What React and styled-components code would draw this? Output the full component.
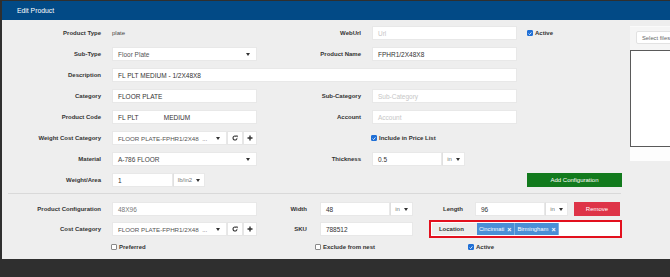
import React from 'react';
import styled, { createGlobalStyle } from 'styled-components';

const GlobalStyle = createGlobalStyle`
  html, body {
    margin: 0;
    padding: 0;
    background: #2f2f2f;
    overflow: hidden;
  }
  body {
    font-family: "Liberation Sans", Arial, sans-serif;
  }
`;

const Page = styled.div`
  width: 670px;
  height: 277px;
  overflow: hidden;
  padding: 1px 0 0 2px;
  box-sizing: border-box;
`;

const Modal = styled.div`
  width: 720px;
  background: #eeeeee;
`;

const Header = styled.div`
  height: 19px;
  background: #024a86;
  color: #fff;
  font-size: 6.8px;
  display: flex;
  align-items: center;
  padding-left: 15px;
`;

const Body = styled.div`
  display: flex;
  height: 239px;
  padding-top: 6px;
  box-sizing: border-box;
`;

const Form = styled.div`
  width: 620px;
  display: flex;
  flex-direction: column;
`;

const Rows = styled.div`
  display: flex;
  flex-direction: column;
  gap: ${p => p.$gap}px;
`;

const Row = styled.div`
  display: flex;
  align-items: center;
  height: 14px;
`;

const Label = styled.div`
  width: ${p => p.$w}px;
  margin-right: ${p => p.$mr ?? 11}px;
  flex-shrink: 0;
  text-align: right;
  font-size: 6px;
  font-weight: bold;
  color: #333;
  white-space: nowrap;
`;

const Static = styled.div`
  width: ${p => p.$w}px;
  font-size: 6px;
  color: #444;
`;

const Field = styled.div`
  width: ${p => p.$w}px;
  height: 14px;
  flex-shrink: 0;
  box-sizing: border-box;
  background: #fff;
  border: 1px solid #e8e8e8;
  padding: 0 6px 0 5px;
  display: flex;
  align-items: center;
  justify-content: space-between;
  font-size: ${p => p.$fs ?? 6.5}px;
  color: ${p => p.$tone ?? '#333'};
  white-space: pre;
  overflow: hidden;
`;

const Caret = styled.span`
  width: 0;
  height: 0;
  border-left: 2px solid transparent;
  border-right: 2px solid transparent;
  border-top: 3px solid #333;
  flex-shrink: 0;
`;

const Unit = styled.div`
  width: ${p => p.$w}px;
  height: 14px;
  box-sizing: border-box;
  background: #fff;
  border: 1px solid #e8e8e8;
  border-left-color: #e0e0e0;
  display: flex;
  align-items: center;
  justify-content: center;
  gap: 4px;
  font-size: 6px;
  color: #777;
`;

const IconBtn = styled.div`
  width: ${p => p.$w}px;
  height: 14px;
  box-sizing: border-box;
  background: #fff;
  border: 1px solid #e6e6e6;
  display: flex;
  align-items: center;
  justify-content: center;
`;

const Check = styled.div`
  display: flex;
  align-items: center;
  gap: 2px;
  font-size: 6px;
  font-weight: bold;
  color: #333;
  margin-left: ${p => p.$ml ?? 0}px;
  width: ${p => (p.$w ? `${p.$w}px` : 'auto')};
`;

const Box = styled.span`
  width: 6px;
  height: 6px;
  box-sizing: border-box;
  border-radius: 1px;
  background: ${p => (p.$on ? '#1f6fd6' : '#fff')};
  border: 1px solid ${p => (p.$on ? '#1f6fd6' : '#8a8a8a')};
  display: flex;
  align-items: center;
  justify-content: center;
`;

const Button = styled.div`
  width: ${p => p.$w}px;
  height: 14px;
  margin-left: ${p => p.$ml ?? 0}px;
  background: ${p => p.$bg};
  color: #fff;
  font-size: 6px;
  display: flex;
  align-items: center;
  justify-content: center;
`;

const Divider = styled.div`
  width: 613px;
  height: 1px;
  background: #d9d9d9;
  margin: 6px 0 8px 6px;
`;

const LocationBox = styled.div`
  width: 194px;
  height: 18px;
  margin-left: 16px;
  box-sizing: border-box;
  border: 2px solid #e3101e;
  padding: 1px;
  background: #fff;
  display: flex;
`;

const LocLabel = styled.div`
  width: 45px;
  background: #ececec;
  font-size: 6px;
  font-weight: bold;
  color: #333;
  display: flex;
  align-items: center;
  padding-left: 7px;
  box-sizing: border-box;
`;

const Tag = styled.div`
  background: #4a8fd6;
  color: #fff;
  font-size: 5.8px;
  display: flex;
  align-items: center;
  gap: 3px;
  padding: 0 3px 0 2px;
  border-right: 1px solid #7db0e3;

  b {
    font-size: 7px;
  }
`;

const CheckRow = styled.div`
  display: flex;
  align-items: center;
  height: 8px;
  margin-top: 7px;
  padding-left: 109px;
`;

const Side = styled.div`
  margin-left: 8px;
  width: 90px;
  align-self: flex-start;
  background: #f5f5f5;
  border-top: 1px solid #fafafa;
`;

const SelectFiles = styled.div`
  margin: 4px 0 0 6px;
  height: 13px;
  box-sizing: border-box;
  background: #fff;
  border: 1px solid #e2e2e2;
  border-radius: 2px;
  font-size: 5.8px;
  color: #666;
  display: flex;
  align-items: center;
  padding-left: 5px;
  white-space: nowrap;
`;

const DropZone = styled.div`
  margin-top: 6px;
  height: 97px;
  box-sizing: border-box;
  background: #fff;
  border: 1px solid #5a5a5a;
`;

const DropFoot = styled.div`
  height: 14px;
  background: #fdfdfd;
`;

const Tick = () => (
  <svg width="5" height="5" viewBox="0 0 10 10">
    <path d="M1.5 5.2 L4 7.7 L8.6 2.3" fill="none" stroke="#fff" strokeWidth="2" />
  </svg>
);

const Refresh = () => (
  <svg width="6" height="6" viewBox="0 0 12 12">
    <path d="M10 6.5a4 4 0 1 1-1.3-3.4" fill="none" stroke="#333" strokeWidth="2.2" />
    <path d="M7 0.8 L11.4 0.8 L11.4 5.2 Z" fill="#333" />
  </svg>
);

const Plus = () => (
  <svg width="6" height="6" viewBox="0 0 12 12">
    <path d="M4.6 1h2.8v3.6H11v2.8H7.4V11H4.6V7.4H1V4.6h3.6z" fill="#333" />
  </svg>
);

const CheckItem = ({ on, children, ml, w }) => (
  <Check $ml={ml} $w={w}>
    <Box $on={on}>{on && <Tick />}</Box>
    {children}
  </Check>
);

const Select = ({ w, children, fs, tone }) => (
  <Field $w={w} $fs={fs} $tone={tone}>
    <span>{children}</span>
    <Caret />
  </Field>
);

const CategoryPicker = () => (
  <>
    <Select w={115} fs={6.2} tone="#555">FLOOR PLATE-FPHR1/2X48  ...</Select>
    <IconBtn $w={16}><Refresh /></IconBtn>
    <IconBtn $w={14}><Plus /></IconBtn>
  </>
);

export default function App() {
  return (
    <Page>
      <GlobalStyle />
      <Modal>
        <Header>Edit Product</Header>
        <Body>
          <Form>
            <Rows $gap={7}>
              <Row>
                <Label $w={99}>Product Type</Label>
                <Static $w={145}>plate</Static>
                <Label $w={104}>WebUrl</Label>
                <Field $w={145} $tone="#c6c6c6">Url</Field>
                <CheckItem on ml={10}>Active</CheckItem>
              </Row>
              <Row>
                <Label $w={99}>Sub-Type</Label>
                <Select w={145} tone="#555">Floor Plate</Select>
                <Label $w={104}>Product Name</Label>
                <Field $w={145}>FPHR1/2X48X8</Field>
              </Row>
              <Row>
                <Label $w={99}>Description</Label>
                <Field $w={405}>FL PLT MEDIUM - 1/2X48X8</Field>
              </Row>
              <Row>
                <Label $w={99}>Category</Label>
                <Field $w={145}>FLOOR PLATE</Field>
                <Label $w={104}>Sub-Category</Label>
                <Field $w={145} $tone="#c6c6c6">Sub-Category</Field>
              </Row>
              <Row>
                <Label $w={99}>Product Code</Label>
                <Field $w={145}>{'FL PLT              MEDIUM'}</Field>
                <Label $w={104}>Account</Label>
                <Field $w={145} $tone="#c6c6c6">Account</Field>
              </Row>
              <Row>
                <Label $w={99}>Weight Cost Category</Label>
                <CategoryPicker />
                <CheckItem on ml={114}>Include in Price List</CheckItem>
              </Row>
              <Row>
                <Label $w={99}>Material</Label>
                <Select w={145} tone="#444">A-786 FLOOR</Select>
                <Label $w={104}>Thickness</Label>
                <Field $w={70}>0.5</Field>
                <Unit $w={23}>in <Caret /></Unit>
              </Row>
              <Row>
                <Label $w={99}>Weight/Area</Label>
                <Field $w={61}>1</Field>
                <Unit $w={32}>lb/in2 <Caret /></Unit>
                <Button $w={95} $ml={322} $bg="#127a1d">Add Configuration</Button>
              </Row>
            </Rows>
            <Divider />
            <Rows $gap={6}>
              <Row>
                <Label $w={99}>Product Configuration</Label>
                <Field $w={145} $tone="#777">48X96</Field>
                <Label $w={50} $mr={13}>Width</Label>
                <Field $w={70}>48</Field>
                <Unit $w={23}>in <Caret /></Unit>
                <Label $w={50} $mr={12}>Length</Label>
                <Field $w={70}>96</Field>
                <Unit $w={23}>in <Caret /></Unit>
                <Button $w={46} $ml={6} $bg="#de3448">Remove</Button>
              </Row>
              <Row>
                <Label $w={99}>Cost Category</Label>
                <CategoryPicker />
                <Label $w={50} $mr={13}>SKU</Label>
                <Field $w={93}>788512</Field>
                <LocationBox>
                  <LocLabel>Location</LocLabel>
                  <Tag>Cincinnati <b>×</b></Tag>
                  <Tag>Birmingham <b>×</b></Tag>
                </LocationBox>
              </Row>
            </Rows>
            <CheckRow>
              <CheckItem w={204}>Preferred</CheckItem>
              <CheckItem w={153}>Exclude from nest</CheckItem>
              <CheckItem on>Active</CheckItem>
            </CheckRow>
          </Form>
          <Side>
            <SelectFiles>Select files...</SelectFiles>
            <DropZone />
            <DropFoot />
          </Side>
        </Body>
      </Modal>
    </Page>
  );
}
